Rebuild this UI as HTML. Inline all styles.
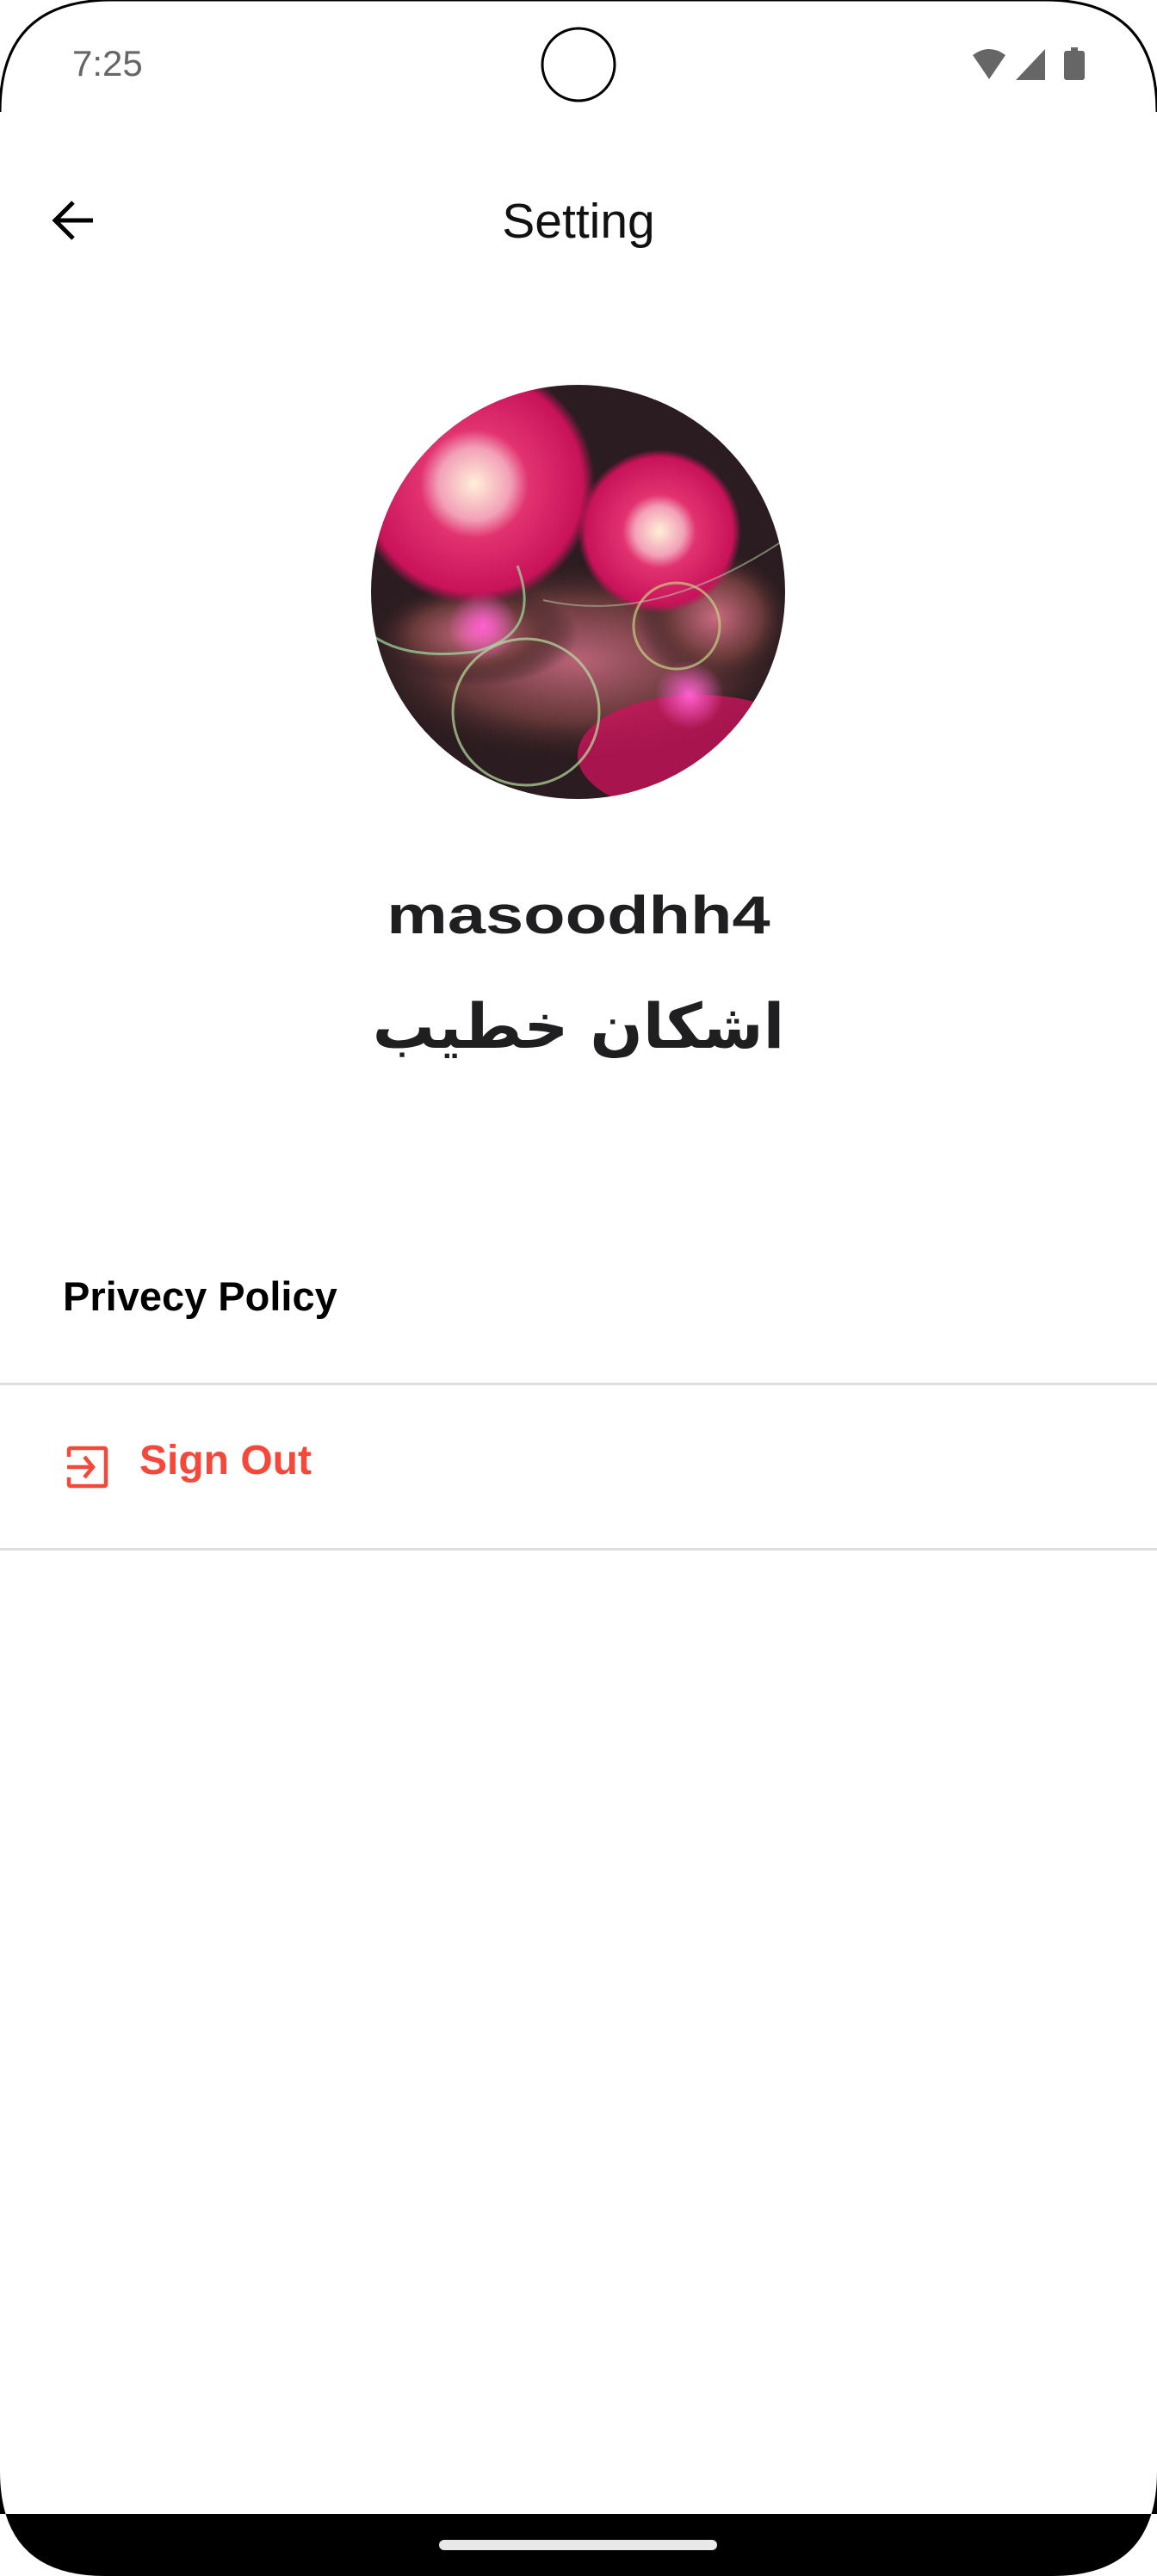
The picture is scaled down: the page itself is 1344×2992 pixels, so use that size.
<!DOCTYPE html>
<html><head><meta charset="utf-8"><style>
html,body{margin:0;padding:0;background:#fff}
body{width:1344px;height:2992px;position:relative;overflow:hidden;font-family:"Liberation Sans",sans-serif}
.abs{position:absolute}
</style></head><body>
<svg class="abs" style="left:0;top:0" width="1344" height="2992">
  <path d="M0 130 Q0 0 130 0 L1214 0 Q1344 0 1344 130" fill="none" stroke="#000" stroke-width="3"/>
  <path d="M0 2920 L1344 2920 L1344 2870 Q1344 2992 1222 2992 L122 2992 Q0 2992 0 2870 Z" fill="#000"/>
  <rect x="510" y="2950" width="323" height="12" rx="6" fill="#e8e8e8"/>
  <circle cx="672" cy="75" r="42" fill="none" stroke="#000" stroke-width="3"/>
  <path d="M1130 64 Q1149 50 1168 64 L1149 92 Z" fill="#666"/>
  <path d="M1180 93 L1214 57 L1214 93 Z" fill="#666"/>
  <rect x="1236" y="59" width="24" height="34" rx="3" fill="#666"/>
  <rect x="1244" y="55" width="8" height="6" fill="#666"/>
  <path d="M108 256 L66 256 M85 235 L64 256 L85 277" fill="none" stroke="#000" stroke-width="5"/>
  <path d="M80 1692 L80 1684 Q80 1682 82 1682 L121 1682 Q123 1682 123 1684 L123 1724 Q123 1726 121 1726 L82 1726 Q80 1726 80 1724 L80 1716" fill="none" stroke="#f4493a" stroke-width="4.5"/>
  <path d="M78 1704 L108 1704 M98 1692 L108 1704 L98 1716" fill="none" stroke="#f4493a" stroke-width="4.5"/>
</svg>
<div class="abs" style="left:84px;top:50px;font-size:42px;color:#666">7:25</div>
<div class="abs" style="left:0;width:1344px;text-align:center;top:224px;font-size:57px;color:#111">Setting</div>

<svg class="abs" style="left:431px;top:447px" width="481" height="481" viewBox="0 0 481 481">
  <defs>
    <clipPath id="c"><circle cx="240.5" cy="240.5" r="240.5"/></clipPath>
    <radialGradient id="r1"><stop offset="0" stop-color="#fff0d8"/><stop offset=".3" stop-color="#f2a0b8"/><stop offset=".45" stop-color="#e2326f"/><stop offset=".9" stop-color="#c8125a"/><stop offset="1" stop-color="#c8125a" stop-opacity="0"/></radialGradient>
    <radialGradient id="sp"><stop offset="0" stop-color="#c86a80"/><stop offset=".6" stop-color="#6a3a3a"/><stop offset="1" stop-color="#2a1a1e" stop-opacity="0"/></radialGradient>
    <radialGradient id="pk"><stop offset="0" stop-color="#ff60d0"/><stop offset="1" stop-color="#ff60d0" stop-opacity="0"/></radialGradient>
  </defs>
  <g clip-path="url(#c)">
    <rect width="481" height="481" fill="#2a1c20"/>
    <ellipse cx="240" cy="320" rx="260" ry="120" fill="url(#sp)" opacity=".9"/>
    <ellipse cx="120" cy="290" rx="120" ry="60" fill="url(#sp)"/>
    <ellipse cx="400" cy="270" rx="90" ry="80" fill="url(#sp)"/>
    <circle cx="120" cy="115" r="140" fill="url(#r1)"/>
    <circle cx="335" cy="170" r="95" fill="url(#r1)"/>
    <ellipse cx="380" cy="430" rx="140" ry="70" fill="#c8145a" opacity=".8"/>
    <circle cx="130" cy="280" r="40" fill="url(#pk)"/>
    <circle cx="370" cy="360" r="40" fill="url(#pk)"/>
    <circle cx="180" cy="380" r="85" fill="none" stroke="#b8e0a0" stroke-width="3" opacity=".7"/>
    <circle cx="355" cy="280" r="50" fill="none" stroke="#c8d080" stroke-width="3" opacity=".7"/>
    <path d="M170 210 Q200 290 120 310 Q40 320 0 290" fill="none" stroke="#a0e0a0" stroke-width="3" opacity=".7"/>
    <path d="M200 250 Q330 280 480 180" fill="none" stroke="#b0c0a0" stroke-width="2" opacity=".6"/>
  </g>
</svg>

<div class="abs" style="left:0;width:1344px;top:1028px;text-align:center;">
  <span style="display:inline-block;font-size:62px;font-weight:bold;color:#1f1f22;transform:scaleX(1.28)">masoodhh4</span>
</div>
<div class="abs" dir="rtl" style="left:0;width:1344px;top:1150px;text-align:center;font-family:'DejaVu Sans',sans-serif;font-size:72px;font-weight:bold;color:#1f1f22">اشکان خطیب</div>

<div class="abs" style="left:73px;top:1478px;font-size:47px;font-weight:bold;color:#000">Privecy Policy</div>
<div class="abs" style="left:0;top:1606px;width:1344px;height:3px;background:#e0e0e0"></div>
<div class="abs" style="left:162px;top:1669px;font-size:48px;font-weight:bold;color:#f4493a">Sign Out</div>
<div class="abs" style="left:0;top:1798px;width:1344px;height:3px;background:#e0e0e0"></div>
</body></html>
